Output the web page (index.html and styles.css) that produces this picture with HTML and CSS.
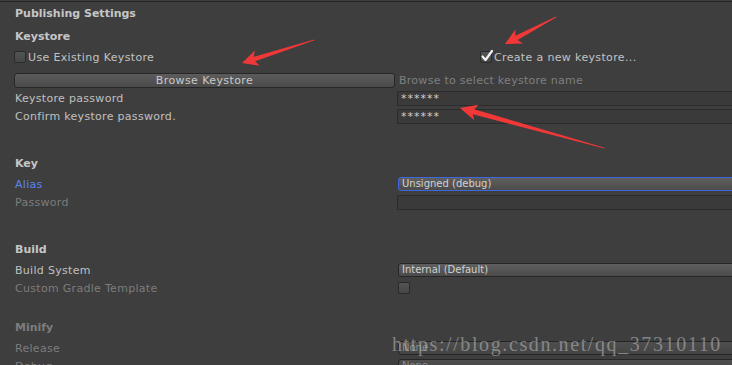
FILE: index.html
```html
<!DOCTYPE html>
<html>
<head>
    <title>Publishing Settings</title>
    <link rel="stylesheet" href="styles.css">
</head>
<body>
    <div class="inspector">
        <div class="title">Publishing Settings</div>

        <section class="group">
            <div class="heading">Keystore</div>
            <div class="row toggles">
                <label class="toggle"><span class="box"></span>Use Existing Keystore</label>
                <label class="toggle">
                    <span class="box">
                        <svg class="check" width="14" height="14" viewBox="0 0 14 14"><path d="M2.5 7.5 L5.5 11 L12 2" fill="none" stroke="#f2f2f2" stroke-width="2.2" stroke-linecap="round" stroke-linejoin="round"/></svg>
                    </span>Create a new keystore...
                </label>
            </div>
            <div class="row browse">
                <button class="btn">Browse Keystore</button>
                <span class="hint">Browse to select keystore name</span>
            </div>
            <div class="row"><span class="label">Keystore password</span><span class="field">******</span></div>
            <div class="row"><span class="label">Confirm keystore password.</span><span class="field">******</span></div>
        </section>

        <section class="group spaced">
            <div class="heading">Key</div>
            <div class="row"><span class="label active">Alias</span><span class="dropdown focused">Unsigned (debug)</span></div>
            <div class="row"><span class="label dim">Password</span><span class="field"></span></div>
        </section>

        <section class="group spaced">
            <div class="heading">Build</div>
            <div class="row"><span class="label">Build System</span><span class="dropdown">Internal (Default)</span></div>
            <div class="row"><span class="label dim">Custom Gradle Template</span><span class="box small-box"></span></div>
        </section>

        <section class="group minify">
            <div class="heading dim">Minify</div>
            <div class="row"><span class="label dim">Release</span><span class="dropdown muted">None</span></div>
            <div class="row"><span class="label dim">Debug</span><span class="dropdown muted">None</span></div>
        </section>
    </div>

    <svg class="arrows" width="732" height="365" viewBox="0 0 732 365">
        <g transform="translate(242 63) rotate(-17.7)">
            <polygon points="0,0 16,-8 13,-2.4 76,-0.4 76,0.4 13,2.4 16,8" fill="#f03838"/>
        </g>
        <g transform="translate(505 44) rotate(-27.9)">
            <polygon points="0,0 16,-8 13,-2.4 58,-0.4 58,0.4 13,2.4 16,8" fill="#f03838"/>
        </g>
        <g transform="translate(460 108) rotate(15.5)">
            <polygon points="0,0 17,-8 14,-2.6 150,-0.4 150,0.4 14,2.6 17,8" fill="#f03838"/>
        </g>
    </svg>

    <div class="watermark">https://blog.csdn.net/qq_37310110</div>
</body>
</html>
```

FILE: styles.css
```css
html, body {
    margin: 0;
    height: 100%;
    overflow: hidden;
    background-color: #3e3e3e;
}
body {
    position: relative;
    font-family: "DejaVu Sans", sans-serif;
    font-size: 11px;
    color: #c4c4c4;
}
.inspector {
    margin-top: 1px;
    border-top: 1px solid #262626;
    padding: 3px 0 0 14px;
}
.title, .heading {
    height: 18px;
    line-height: 18px;
    padding-left: 1px;
    font-weight: bold;
    color: #c6c6c6;
}
.group {
    margin-top: 5px;
}
.group.spaced {
    margin-top: 30px;
}
.group.minify {
    margin-top: 22px;
}
.heading {
    margin-bottom: 2px;
}
.heading.dim {
    color: #7c7c7c;
}
.row {
    display: grid;
    grid-template-columns: 383px 1fr;
    align-items: center;
    height: 18px;
}
.row.toggles {
    grid-template-columns: 466px 1fr;
}
.row.browse {
    margin-top: 5px;
}
.label {
    padding-left: 1px;
    letter-spacing: 0.3px;
    color: #c0c0c0;
    white-space: nowrap;
}
.label.dim {
    color: #7c7c7c;
}
.label.active {
    color: #5a85f0;
}
.toggle {
    display: flex;
    align-items: center;
    letter-spacing: 0.35px;
    color: #c2c2c2;
    white-space: nowrap;
}
.box {
    position: relative;
    width: 10px;
    height: 10px;
    margin-right: 2px;
    border: 1px solid #2a2a2a;
    border-radius: 2px;
    background: linear-gradient(#545454, #474747);
}
.check {
    position: absolute;
    left: -1px;
    top: -3px;
}
.small-box {
    margin-left: 1px;
}
.btn {
    width: 381px;
    height: 15px;
    padding: 0;
    font-family: "DejaVu Sans", sans-serif;
    font-size: 11px;
    line-height: 13px;
    letter-spacing: 0.4px;
    color: #cacaca;
    border: 1px solid #272727;
    border-radius: 3px;
    background: linear-gradient(#5c5c5c, #4a4a4a);
}
.hint {
    padding-left: 2px;
    letter-spacing: 0.27px;
    color: #7e7e7e;
    white-space: nowrap;
}
.field {
    height: 13px;
    margin-right: -10px;
    padding-left: 3px;
    line-height: 14px;
    letter-spacing: 1px;
    color: #cfcfcf;
    border: 1px solid #2b2b2b;
    background: #3a3a3a;
}
.dropdown {
    height: 12px;
    margin: 0 -10px 0 1px;
    padding-left: 3px;
    font-size: 10px;
    line-height: 12px;
    color: #d2d2d2;
    border: 1px solid #262626;
    border-radius: 3px;
    background: linear-gradient(#5f5f5f, #4b4b4b);
    white-space: nowrap;
}
.dropdown.focused {
    border-color: #3f66dc;
}
.dropdown.muted {
    color: #8a8a8a;
    background: linear-gradient(#4e4e4e, #444444);
}
.arrows {
    position: absolute;
    left: 0;
    top: 0;
    pointer-events: none;
}
.watermark {
    position: absolute;
    left: 392px;
    top: 333px;
    font-family: "Liberation Serif", serif;
    font-size: 20px;
    letter-spacing: 1.6px;
    color: rgba(190, 190, 190, 0.55);
    white-space: nowrap;
}
```
